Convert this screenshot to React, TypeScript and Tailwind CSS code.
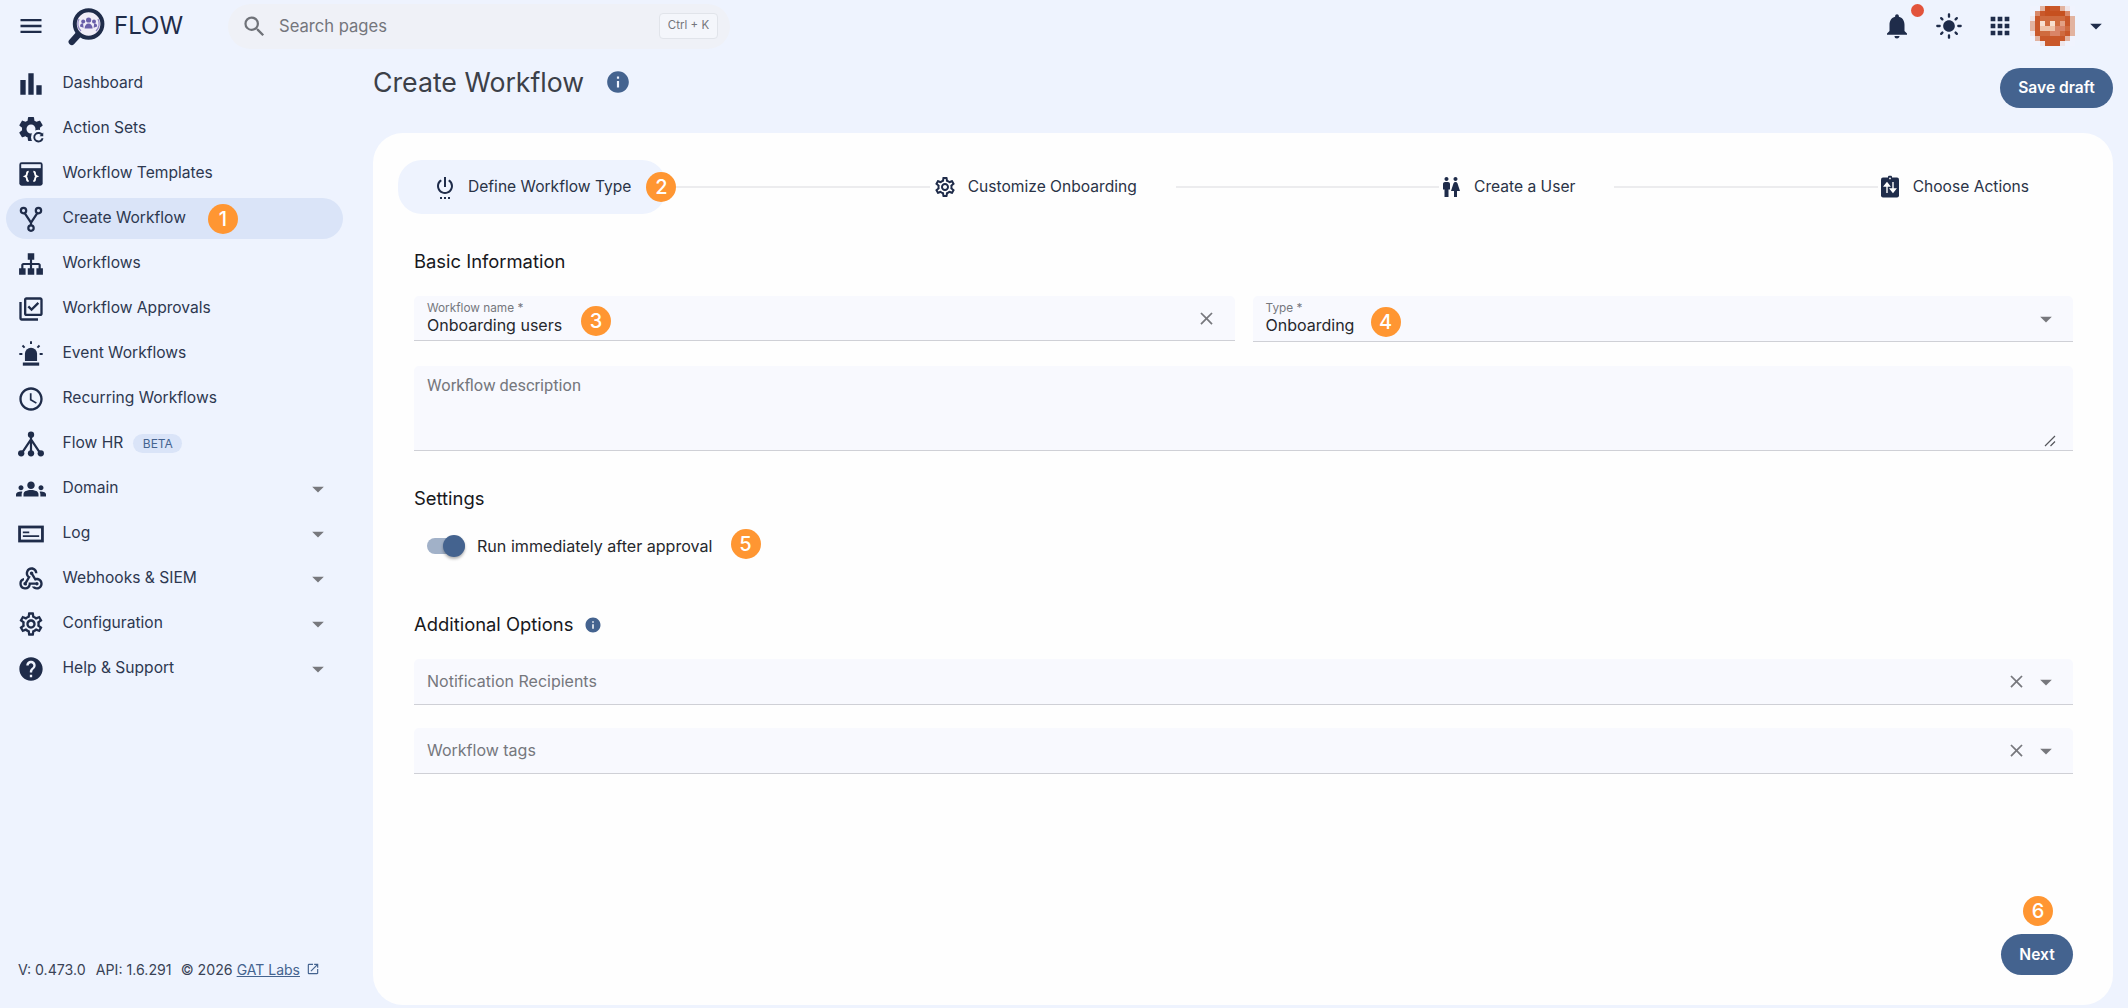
import React from "react";
import {
  MdMenu, MdSearch, MdNotifications, MdLightMode, MdApps, MdArrowDropDown, MdInfo, MdBarChart,
  MdOutlineLibraryAddCheck, MdOutlineSchedule, MdGroups, MdWebhook, MdOutlineSettings, MdHelp,
  MdSettingsPower, MdWc, MdClose, MdOpenInNew,
} from "react-icons/md";

const NAVY = "#1f2c4a";

function Badge({ n, className = "" }: { n: number; className?: string }) {
  return (
    <span className={`flex h-[30px] w-[30px] shrink-0 items-center justify-center rounded-full bg-[#ff9632] text-[20px] font-medium leading-none text-white ${className}`}>
      {n}
    </span>
  );
}

function ActionSetsIcon() {
  return (
    <svg width="30" height="30" viewBox="0 0 24 24" fill={NAVY}>
      <path d="M19.14 12.94c.04-.3.06-.61.06-.94 0-.32-.02-.64-.07-.94l2.03-1.58c.18-.14.23-.41.12-.61l-1.92-3.32c-.12-.22-.37-.29-.59-.22l-2.39.96c-.5-.38-1.03-.7-1.62-.94l-.36-2.54c-.04-.24-.24-.41-.48-.41h-3.84c-.24 0-.43.17-.47.41l-.36 2.54c-.59.24-1.13.57-1.62.94l-2.39-.96c-.22-.08-.47 0-.59.22L2.74 8.87c-.12.21-.08.47.12.61l2.03 1.58c-.05.3-.09.63-.09.94s.02.64.07.94l-2.03 1.58c-.18.14-.23.41-.12.61l1.92 3.32c.12.22.37.29.59.22l2.39-.96c.5.38 1.03.7 1.62.94l.36 2.54c.05.24.24.41.48.41h3.84c.24 0 .44-.17.47-.41l.36-2.54c.59-.24 1.13-.56 1.62-.94l2.39.96c.22.08.47 0 .59-.22l1.92-3.32c.12-.22.07-.47-.12-.61l-2.01-1.58zM12 15.6c-1.98 0-3.6-1.62-3.6-3.6s1.62-3.6 3.6-3.6 3.6 1.62 3.6 3.6-1.62 3.6-3.6 3.6z" />
      <circle cx="18" cy="18.5" r="6" fill="#eef3fe" />
      <path d="M21 17a3.4 3.4 0 1 0 .3 2.4" fill="none" stroke={NAVY} strokeWidth="1.5" />
      <path d="M21.8 14.8v3h-3z" />
    </svg>
  );
}

function TemplatesIcon() {
  return (
    <svg width="28" height="28" viewBox="0 0 24 24">
      <rect x="2" y="2" width="20" height="20" rx="2" fill={NAVY} />
      <rect x="3.6" y="3.6" width="16.8" height="3.4" fill="#eef3fe" />
      <path d="M10 10c-1.5 0-1.5 1-1.5 2s-.3 1.5-1.5 2c1.2.5 1.5 1 1.5 2s0 2 1.5 2M14 10c1.5 0 1.5 1 1.5 2s.3 1.5 1.5 2c-1.2.5-1.5 1-1.5 2s0 2-1.5 2" stroke="#fff" strokeWidth="1.6" fill="none" />
    </svg>
  );
}

function ForkIcon() {
  return (
    <svg width="28" height="28" viewBox="0 0 24 24" fill="none" stroke={NAVY} strokeWidth="1.9">
      <circle cx="5.6" cy="4.8" r="2.3" />
      <circle cx="18.4" cy="4.8" r="2.3" />
      <circle cx="12" cy="19.8" r="2.3" />
      <path d="M6.6 7 12 15.2 17.4 7M12 15.2v2.4" />
    </svg>
  );
}

function SitemapIcon() {
  return (
    <svg width="26" height="26" viewBox="0 0 24 24" fill={NAVY}>
      <path d="M9 2v6h2v3H5c-1.11 0-2 .89-2 2v3H1v6h6v-6H5v-3h6v3H9v6h6v-6h-2v-3h6v3h-2v6h6v-6h-2v-3c0-1.11-.89-2-2-2h-6V8h2V2H9z" />
    </svg>
  );
}

function SirenIcon() {
  return (
    <svg width="28" height="28" viewBox="0 0 24 24" fill={NAVY}>
      <path d="M6.8 18v-6.2a5.2 5.2 0 0 1 10.4 0V18z" />
      <rect x="5" y="19.3" width="14" height="2.7" />
      <g stroke={NAVY} strokeWidth="1.7">
        <path d="M12 1v2.4M2 12h2.6M19.4 12H22M4.7 4.7l1.8 1.8M19.3 4.7l-1.8 1.8" />
      </g>
    </svg>
  );
}

function HrIcon() {
  return (
    <svg width="28" height="28" viewBox="0 0 24 24" fill={NAVY}>
      <g stroke={NAVY} strokeWidth="1.9" fill="none">
        <path d="M12 4v16M12 8 4 20M12 8l8 12" />
      </g>
      <circle cx="12" cy="4" r="2.7" />
      <circle cx="3.6" cy="20" r="2.7" />
      <circle cx="12" cy="20" r="2.7" />
      <circle cx="20.4" cy="20" r="2.7" />
    </svg>
  );
}

function LogIcon() {
  return (
    <svg width="28" height="28" viewBox="0 0 24 24" fill="none" stroke={NAVY}>
      <rect x="2.2" y="6" width="19.6" height="12" strokeWidth="2.4" />
      <path d="M5 10.5h5.5M5 13.8h14" strokeWidth="1.5" />
    </svg>
  );
}

function ChooseIcon() {
  return (
    <svg width="26" height="26" viewBox="0 0 24 24">
      <rect x="3" y="2.5" width="18" height="20" rx="2" fill={NAVY} />
      <rect x="10" y="0.8" width="4" height="3" rx="1" fill={NAVY} />
      <circle cx="12" cy="3.4" r="0.9" fill="#fff" />
      <path d="M9 18V8.5M6.5 11 9 7.8l2.5 3.2zM15 7v9.5M12.5 14l2.5 3.2 2.5-3.2z" stroke="#fff" strokeWidth="1.4" fill="#fff" />
    </svg>
  );
}

function Logo() {
  return (
    <svg width="37" height="38" viewBox="0 0 37 38" className="shrink-0">
      <line x1="10" y1="27" x2="3.8" y2="33.8" stroke={NAVY} strokeWidth="6.4" strokeLinecap="round" />
      <circle cx="20.6" cy="16" r="13.8" fill="#f0edf8" stroke={NAVY} strokeWidth="4" />
      <g fill="#6a5fa9">
        <circle cx="20.6" cy="12" r="2.6" />
        <circle cx="15.2" cy="13.5" r="2" />
        <circle cx="26" cy="13.5" r="2" />
        <path d="M16.6 20.5c0-3 1.8-5 4-5s4 2 4 5zM12 18.5c0-2 1.2-3.2 3-3.2l.6 4.5zM29.2 18.5c0-2-1.2-3.2-3-3.2l-.6 4.5z" />
      </g>
      <g fill="none" stroke="#8f86c2" strokeWidth="1.2">
        <path d="M11 11a10 10 0 0 0 2 12M30 11a10 10 0 0 1-2 12" />
      </g>
    </svg>
  );
}

const PAL: Record<string, string> = {
  _: "#f0f3fe", P: "#efe6ea", L: "#e2b3a0", M: "#d9896a", O: "#c6501f", D: "#c9582a", o: "#cf6b3f",
  C: "#f7dfd0", B: "#efc3aa", A: "#d98467", E: "#e3a184",
};
const AVATAR = ["__LODDLP_", "_MDOOOOM_", "PDoooooDL", "LDCoCoEDL", "LDBBBAAoL", "PDooAAoDL", "_LDDDDDL_", "__PDDDP__"];

function Avatar() {
  return (
    <svg width="45" height="40" viewBox="0 0 9 8" shapeRendering="crispEdges" className="shrink-0">
      {AVATAR.map((row, y) =>
        row.split("").map((c, x) => <rect key={`${x}-${y}`} x={x} y={y} width="1.02" height="1.02" fill={PAL[c] ?? PAL._} />)
      )}
    </svg>
  );
}

const NAV: { label: string; icon: React.ReactNode; active?: boolean; caret?: boolean; badge?: number; beta?: boolean }[] = [
  { label: "Dashboard", icon: <MdBarChart size={32} color={NAVY} /> },
  { label: "Action Sets", icon: <ActionSetsIcon /> },
  { label: "Workflow Templates", icon: <TemplatesIcon /> },
  { label: "Create Workflow", icon: <ForkIcon />, active: true, badge: 1 },
  { label: "Workflows", icon: <SitemapIcon /> },
  { label: "Workflow Approvals", icon: <MdOutlineLibraryAddCheck size={28} color={NAVY} /> },
  { label: "Event Workflows", icon: <SirenIcon /> },
  { label: "Recurring Workflows", icon: <MdOutlineSchedule size={28} color={NAVY} /> },
  { label: "Flow HR", icon: <HrIcon />, beta: true },
  { label: "Domain", icon: <MdGroups size={30} color={NAVY} />, caret: true },
  { label: "Log", icon: <LogIcon />, caret: true },
  { label: "Webhooks & SIEM", icon: <MdWebhook size={28} color={NAVY} />, caret: true },
  { label: "Configuration", icon: <MdOutlineSettings size={28} color={NAVY} />, caret: true },
  { label: "Help & Support", icon: <MdHelp size={28} color={NAVY} />, caret: true },
];

function Step({ icon, label, active, className = "", children }: { icon: React.ReactNode; label: string; active?: boolean; className?: string; children?: React.ReactNode }) {
  return (
    <div className={`relative flex h-[54px] shrink-0 items-center gap-[11px] ${active ? "rounded-[24px] bg-[#eef3fe] px-[35px]" : "pr-[39px]"} ${className}`}>
      <span className="flex w-[24px] items-center justify-center">{icon}</span>
      <span className="text-[15.6px] text-[#2a3347]">{label}</span>
      {children}
    </div>
  );
}

function SectionTitle({ children }: { children: React.ReactNode }) {
  return <div className="flex h-[24px] items-center pb-[2px] text-[18.4px] leading-[24px] text-[#17181c]">{children}</div>;
}

function SelectField({ label, mt }: { label: string; mt: string }) {
  return (
    <div className={`flex h-[46px] items-center rounded-t-[5px] border-b border-[#cfd0d6] bg-[#f8f9fe] pl-[13px] pr-[15px] ${mt}`}>
      <span className="-mt-[2px] flex-1 text-[16px] text-[#75777d]">{label}</span>
      <MdClose size={21} color="#77787d" className="mr-[5px]" />
      <MdArrowDropDown size={28} color="#77787d" className="-mr-[2px]" />
    </div>
  );
}

export default function App() {
  return (
    <div className="flex h-[1008px] w-full flex-col overflow-hidden bg-[#eef3fe] font-['Inter',sans-serif]">
      <header className="flex h-[52px] shrink-0 items-center">
        <MdMenu size={28} color={NAVY} className="ml-[17px] shrink-0" />
        <span className="ml-[23px] mt-[2px]"><Logo /></span>
        <span className="ml-[9px] w-[68px] text-[24px] leading-none text-[#1f2c4a]">FLOW</span>
        <div className="ml-[46px] flex h-[45px] w-[502px] items-center rounded-full bg-[#eff1f7] pl-[13px] pr-[12px]">
          <MdSearch size={27} color="#6f7278" />
          <span className="ml-[11px] flex-1 text-[16.6px] text-[#74767c]">Search pages</span>
          <span className="flex h-[26px] w-[59px] items-center justify-center rounded-[4px] border border-[#e1e4ea] bg-[#f4f6fb] text-[11.5px] text-[#74767c]">Ctrl + K</span>
        </div>
        <div className="ml-auto flex items-center pr-[18px]">
          <span className="relative mr-[23px] flex">
            <MdNotifications size={30} color={NAVY} />
            <span className="absolute -right-[12px] -top-[7px] h-[13px] w-[13px] rounded-full bg-[#e2533b]" />
          </span>
          <MdLightMode size={28} color={NAVY} className="mr-[23px]" />
          <MdApps size={28} color={NAVY} className="mr-[16px]" />
          <Avatar />
          <MdArrowDropDown size={28} color={NAVY} className="ml-[7px]" />
        </div>
      </header>

      <div className="flex min-h-0 flex-1">
        <aside className="flex w-[373px] shrink-0 flex-col justify-between pb-[28px] pt-[9px]">
          <nav className="flex flex-col">
            {NAV.map((n) => (
              <div key={n.label} className="flex h-[45px] items-center pl-[6px]">
                <div className={`flex h-[41px] w-[337px] items-center rounded-full pl-[9px] pr-[11px] ${n.active ? "bg-[#dae4f8]" : ""}`}>
                  <span className="flex w-[32px] shrink-0 items-center justify-center">{n.icon}</span>
                  <span className="-mt-[2px] ml-[15.5px] text-[15.6px] text-[#2d3850]">{n.label}</span>
                  {n.badge ? <Badge n={n.badge} className="ml-[22px]" /> : null}
                  {n.beta ? (
                    <span className="ml-[10px] flex h-[19px] w-[49px] items-center justify-center rounded-full bg-[#dae4f8] text-[12px] text-[#44638f]">BETA</span>
                  ) : null}
                  {n.caret ? <MdArrowDropDown size={28} color="#77787d" className="ml-auto" /> : null}
                </div>
              </div>
            ))}
          </nav>
          <div className="flex items-center pl-[18px] text-[14.2px] text-[#3a4356]">
            <span>V: 0.473.0</span>
            <span className="ml-[10px]">API: 1.6.291</span>
            <span className="ml-[9px]">© 2026</span>
            <span className="ml-[4px] text-[14px] text-[#44638f] underline">GAT Labs</span>
            <MdOpenInNew size={14} color="#44638f" className="ml-[6px]" />
          </div>
        </aside>

        <main className="flex min-w-0 flex-1 flex-col pb-[3px] pr-[15px]">
          <div className="flex h-[81px] shrink-0 items-start justify-between">
            <div className="flex items-center pt-[13px]">
              <h1 className="text-[26.7px] font-normal leading-[34px] text-[#3c4048]">Create Workflow</h1>
              <MdInfo size={26} color="#44638f" className="ml-[21px]" />
            </div>
            <button className="mt-[16px] h-[40px] w-[113px] rounded-full bg-[#44638f] text-[15.6px] font-semibold text-white">Save draft</button>
          </div>

          <div className="flex min-h-0 flex-1 flex-col rounded-[30px] bg-[#fefefe] pb-[30px] pl-[25px] pr-[40px] pt-[27px]">
            <div className="flex items-center pr-[5px]">
              <Step active icon={<MdSettingsPower size={28} color={NAVY} />} label="Define Workflow Type">
                <Badge n={2} className="absolute -right-[10px] top-[12px]" />
              </Step>
              <div className="h-[2px] flex-1 bg-[#ececee]" />
              <Step className="ml-[3px]" icon={<MdOutlineSettings size={28} color={NAVY} />} label="Customize Onboarding" />
              <div className="h-[2px] flex-1 bg-[#ececee]" />
              <Step icon={<MdWc size={28} color={NAVY} />} label="Create a User" />
              <div className="h-[2px] flex-1 bg-[#ececee]" />
              <Step icon={<ChooseIcon />} label="Choose Actions" />
            </div>

            <div className="flex flex-1 flex-col pl-[16px]">
              <div className="mt-[36px]"><SectionTitle>Basic Information</SectionTitle></div>
              <div className="mt-[22px] grid grid-cols-2 gap-[18px]">
                <div className="relative flex h-[45px] items-start rounded-t-[5px] border-b border-[#cfd0d6] bg-[#f8f9fe] pl-[13px] pr-[18px] pt-[5px]">
                  <div className="flex flex-1 flex-col">
                    <span className="text-[11.8px] leading-[14px] text-[#75777d]">Workflow name *</span>
                    <span className="text-[16px] leading-[20px] text-[#26282d]">Onboarding users</span>
                  </div>
                  <MdClose size={21} color="#77787d" className="mt-[7px]" />
                  <Badge n={3} className="absolute left-[167px] top-[10px]" />
                </div>
                <div className="relative flex h-[46px] items-start rounded-t-[5px] border-b border-[#cfd0d6] bg-[#f8f9fe] pl-[13px] pr-[15px] pt-[5px]">
                  <div className="flex flex-1 flex-col">
                    <span className="text-[11.8px] leading-[14px] text-[#75777d]">Type *</span>
                    <span className="text-[16px] leading-[20px] text-[#26282d]">Onboarding</span>
                  </div>
                  <MdArrowDropDown size={28} color="#77787d" className="-mr-[2px] mt-[4px]" />
                  <Badge n={4} className="absolute left-[118px] top-[11px]" />
                </div>
              </div>
              <div className="relative mt-[24px] h-[85px] rounded-t-[5px] border-b border-[#cfd0d6] bg-[#f8f9fe] pl-[13px] pt-[7px]">
                <span className="font-['Roboto',sans-serif] text-[16.4px] leading-[20px] text-[#75777d]">Workflow description</span>
                <svg width="12" height="12" viewBox="0 0 12 12" className="absolute bottom-[3px] right-[17px]" stroke="#55575c" strokeWidth="1.2">
                  <path d="M1 11 11 1M6.5 11 11 6.5" />
                </svg>
              </div>

              <div className="mt-[36px]"><SectionTitle>Settings</SectionTitle></div>
              <div className="mt-[23px] flex h-[24px] items-center pl-[13px]">
                <div className="relative flex h-[24px] w-[38px] items-center">
                  <span className="h-[16px] w-full rounded-full bg-[#a1b1c8]" />
                  <span className="absolute right-0 top-[1px] h-[22px] w-[22px] rounded-full bg-[#44638f] shadow-[0_2px_3px_rgba(0,0,0,0.3)]" />
                </div>
                <span className="ml-[12px] text-[16.1px] text-[#26282d]">Run immediately after approval</span>
                <Badge n={5} className="-mt-[5px] ml-[18px]" />
              </div>

              <div className="mt-[55px] flex items-center">
                <SectionTitle>Additional Options</SectionTitle>
                <MdInfo size={18} color="#44638f" className="ml-[11px]" />
              </div>
              <SelectField label="Notification Recipients" mt="mt-[22px]" />
              <SelectField label="Workflow tags" mt="mt-[23px]" />

              <div className="mt-auto flex justify-end">
                <button className="relative h-[41px] w-[72px] rounded-full bg-[#44638f] text-[15.6px] font-semibold text-white">
                  Next
                  <Badge n={6} className="absolute -top-[38px] left-[22px]" />
                </button>
              </div>
            </div>
          </div>
        </main>
      </div>
    </div>
  );
}
